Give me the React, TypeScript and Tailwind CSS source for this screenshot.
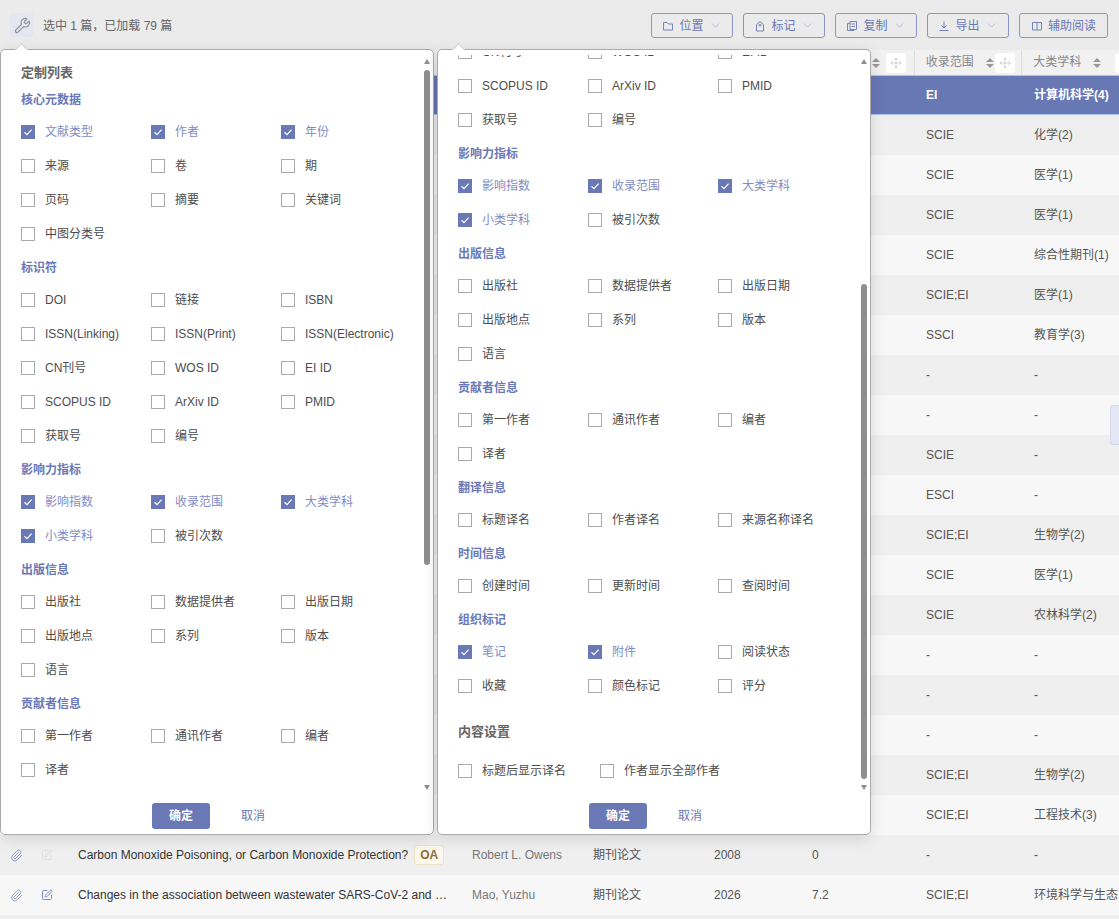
import { ChevronDown, Move, Paperclip, SquarePen, Wrench } from "lucide-react";

type Item = { label: string; checked?: boolean };
type Group = { title: string; items: Item[] };

const GROUPS: Group[] = [
  {
    title: "核心元数据",
    items: [
      { label: "文献类型", checked: true },
      { label: "作者", checked: true },
      { label: "年份", checked: true },
      { label: "来源" },
      { label: "卷" },
      { label: "期" },
      { label: "页码" },
      { label: "摘要" },
      { label: "关键词" },
      { label: "中图分类号" },
    ],
  },
  {
    title: "标识符",
    items: [
      { label: "DOI" },
      { label: "链接" },
      { label: "ISBN" },
      { label: "ISSN(Linking)" },
      { label: "ISSN(Print)" },
      { label: "ISSN(Electronic)" },
      { label: "CN刊号" },
      { label: "WOS ID" },
      { label: "EI ID" },
      { label: "SCOPUS ID" },
      { label: "ArXiv ID" },
      { label: "PMID" },
      { label: "获取号" },
      { label: "编号" },
    ],
  },
  {
    title: "影响力指标",
    items: [
      { label: "影响指数", checked: true },
      { label: "收录范围", checked: true },
      { label: "大类学科", checked: true },
      { label: "小类学科", checked: true },
      { label: "被引次数" },
    ],
  },
  {
    title: "出版信息",
    items: [
      { label: "出版社" },
      { label: "数据提供者" },
      { label: "出版日期" },
      { label: "出版地点" },
      { label: "系列" },
      { label: "版本" },
      { label: "语言" },
    ],
  },
  {
    title: "贡献者信息",
    items: [{ label: "第一作者" }, { label: "通讯作者" }, { label: "编者" }, { label: "译者" }],
  },
  {
    title: "翻译信息",
    items: [{ label: "标题译名" }, { label: "作者译名" }, { label: "来源名称译名" }],
  },
  {
    title: "时间信息",
    items: [{ label: "创建时间" }, { label: "更新时间" }, { label: "查阅时间" }],
  },
  {
    title: "组织标记",
    items: [
      { label: "笔记", checked: true },
      { label: "附件", checked: true },
      { label: "阅读状态" },
      { label: "收藏" },
      { label: "颜色标记" },
      { label: "评分" },
    ],
  },
];

const ROWS = [
  ["EI", "计算机科学(4)"],
  ["SCIE", "化学(2)"],
  ["SCIE", "医学(1)"],
  ["SCIE", "医学(1)"],
  ["SCIE", "综合性期刊(1)"],
  ["SCIE;EI", "医学(1)"],
  ["SSCI", "教育学(3)"],
  ["-", "-"],
  ["-", "-"],
  ["SCIE", "-"],
  ["ESCI", "-"],
  ["SCIE;EI", "生物学(2)"],
  ["SCIE", "医学(1)"],
  ["SCIE", "农林科学(2)"],
  ["-", "-"],
  ["-", "-"],
  ["-", "-"],
  ["SCIE;EI", "生物学(2)"],
  ["SCIE;EI", "工程技术(3)"],
];

function Check({ item, className }: { item: Item; className?: string }) {
  return (
    <label className={`flex h-[34px] items-center ${className ?? ""}`}>
      {item.checked ? (
        <span className="flex h-[14px] w-[14px] items-center justify-center bg-[#6a78b6]">
          <svg viewBox="0 0 14 14" className="h-[14px] w-[14px]" fill="none" stroke="#fff" strokeWidth="1.2">
            <path d="M3.5 7.2 6 9.6l4.6-5" />
          </svg>
        </span>
      ) : (
        <span className="h-[14px] w-[14px] border border-[#aaaaaa] bg-white" />
      )}
      <span className={`ml-[10px] ${item.checked ? "text-[#7f8cc4]" : "text-[#4d4d4d]"}`}>{item.label}</span>
    </label>
  );
}

function ScrollBar({ thumbTop }: { thumbTop: number }) {
  return (
    <>
      <span className="absolute right-[3px] top-[9px] h-0 w-0 border-x-[3px] border-b-[5px] border-x-transparent border-b-[#8f8f8f]" />
      <span
        className="absolute right-[3px] w-[6px] rounded-[3px] bg-[#8f8f8f]"
        style={{ top: thumbTop, height: 495 }}
      />
      <span className="absolute right-[3px] top-[735px] h-0 w-0 border-x-[3px] border-t-[5px] border-x-transparent border-t-[#8f8f8f]" />
    </>
  );
}

function Panel({ left, scroll, thumbTop }: { left: number; scroll: number; thumbTop: number }) {
  return (
    <div
      className="absolute top-[49px] h-[786px] w-[434px] rounded-[5px] border border-[#aaaaaa] bg-white shadow-[0_4px_16px_rgba(0,0,0,0.12)]"
      style={{ left }}
    >
      <span className="absolute left-[16px] top-[-5px] h-[9px] w-[9px] rotate-45 border-l border-t border-[#cccccc] bg-white" />
      <div className="mt-[5px] h-[730px] overflow-hidden">
        <div className="pl-[20px] pt-[8px]" style={{ marginTop: -scroll }}>
          <h3 className="h-[20px] text-[13px] font-bold leading-[20px] text-[#666666]">定制列表</h3>
          {GROUPS.map((group) => (
            <section key={group.title}>
              <h4 className="flex h-[32px] items-center pt-[1px] font-bold text-[#6a78b6]">{group.title}</h4>
              <div className="grid w-[390px] grid-cols-3">
                {group.items.map((item) => (
                  <Check key={item.label} item={item} />
                ))}
              </div>
            </section>
          ))}
          <h3 className="mt-[14px] flex h-[30px] items-center text-[13px] font-bold text-[#666666]">内容设置</h3>
          <div className="mt-[7px] flex">
            <Check item={{ label: "标题后显示译名" }} className="w-[142px]" />
            <Check item={{ label: "作者显示全部作者" }} />
          </div>
        </div>
      </div>
      <ScrollBar thumbTop={thumbTop} />
      <div className="flex items-center pl-[151px] pt-[18px]">
        <button className="h-[26px] w-[58px] rounded-[3px] bg-[#6a78b6] font-bold text-white">确定</button>
        <button className="ml-[31px] text-[#6a78b6]">取消</button>
      </div>
    </div>
  );
}

function ToolIcon({ children }: { children: React.ReactNode }) {
  return (
    <svg viewBox="0 0 12 12" className="h-[12px] w-[12px]" fill="none" stroke="currentColor" strokeWidth="0.9">
      {children}
    </svg>
  );
}

function ToolButton({ icon, label, arrow = true, width }: { icon: React.ReactNode; label: string; arrow?: boolean; width: string }) {
  return (
    <button className={`flex h-[25px] items-center justify-center gap-[4px] rounded-[3px] border border-[#8a96cb] text-[#6a78b6] ${width}`}>
      {icon}
      <span className="ml-[1px]">{label}</span>
      {arrow && <ChevronDown size={13} strokeWidth={1} className="ml-[1px] text-[#8a96cb]" />}
    </button>
  );
}

function HeaderCell({ label, className, gap }: { label?: string; className: string; gap: string }) {
  return (
    <div className={`flex h-full items-center overflow-hidden border-r border-[#dddddd] ${className}`}>
      {label && <span className="mb-[1px] ml-[11px] w-[60px] shrink-0 whitespace-nowrap text-[#888888]">{label}</span>}
      <span className="flex shrink-0 flex-col gap-[2px]">
        <span className="h-0 w-0 border-x-[4px] border-b-[4px] border-x-transparent border-b-[#999999]" />
        <span className="h-0 w-0 border-x-[4px] border-t-[4px] border-x-transparent border-t-[#999999]" />
      </span>
      <span className={`flex h-[20px] w-[20px] shrink-0 items-center justify-center rounded-[3px] bg-white ${gap}`}>
        <Move size={12} strokeWidth={1} className="text-[#aaaaaa]" />
      </span>
    </div>
  );
}

function DataRow({ cells, selected, even }: { cells: string[]; selected?: boolean; even: boolean }) {
  return (
    <div
      className={`flex h-[40px] items-center pl-[926px] ${
        selected ? "border-y border-[#a9c3ea] bg-[#6878b5] font-bold text-white" : even ? "bg-[#efefef] text-[#555555]" : "bg-[#f7f7f7] text-[#555555]"
      }`}
    >
      <span className="w-[108px]">{cells[0]}</span>
      <span className="whitespace-nowrap">{cells[1]}</span>
    </div>
  );
}

function BottomRow({ title, oa, author, year, impact, index, subject, even, noted }: {
  title: string;
  oa?: boolean;
  author: string;
  year: string;
  impact: string;
  index: string;
  subject: string;
  even: boolean;
  noted?: boolean;
}) {
  return (
    <div className={`flex h-[40px] items-center whitespace-nowrap text-[#555555] ${even ? "bg-[#efefef]" : "bg-[#f7f7f7]"}`}>
      <span className="flex w-[78px] items-center pl-[10px]">
        <Paperclip size={13} strokeWidth={1.6} className="text-[#8a96cb]" />
        <SquarePen size={12} strokeWidth={2} className={`ml-[18px] ${noted ? "text-[#7f8cc4]" : "text-[#e2e2e2]"}`} />
      </span>
      <span className="flex w-[394px] items-center text-[#333333]">
        <span className="max-w-[369px] overflow-hidden text-ellipsis">{title}</span>
        {oa && (
          <span className="ml-[6px] flex h-[20px] w-[30px] items-center justify-center rounded-[3px] border border-[#eee3c8] bg-[#fbf7ea] font-bold text-[#8a6d3b]">
            OA
          </span>
        )}
      </span>
      <span className="w-[121px] text-[#777777]">{author}</span>
      <span className="w-[121px]">期刊论文</span>
      <span className="w-[98px]">{year}</span>
      <span className="w-[114px]">{impact}</span>
      <span className="w-[108px]">{index}</span>
      <span>{subject}</span>
    </div>
  );
}

export default function App() {
  return (
    <div className="relative h-[919px] w-[1119px] overflow-hidden bg-[#ebebeb] font-['Liberation_Sans','Noto_Sans_CJK_SC',sans-serif] text-[12px]">
      {/* Toolbar */}
      <div className="flex h-[50px] items-start pl-[10px] pr-[11px] pt-[13px]">
        <span className="flex h-[24px] w-[24px] items-center justify-center rounded-[3px] bg-[#e4e7f3]">
          <Wrench size={17} strokeWidth={1.6} className="text-[#8f8f8f]" />
        </span>
        <span className="ml-[9px] mt-[4px] text-[#666666]">选中 1 篇，已加载 79 篇</span>
        <div className="ml-auto flex gap-[10px]">
          <ToolButton
            icon={<ToolIcon><path d="M1.5 2.5H5L6.5 4H10.5V10H1.5Z" /></ToolIcon>}
            label="位置"
            width="w-[82px]"
          />
          <ToolButton
            icon={<ToolIcon><path d="M2.5 4.5 6 1.5l3.5 3V11h-7Z" /><circle cx="6" cy="5" r="1" /></ToolIcon>}
            label="标记"
            width="w-[82px]"
          />
          <ToolButton
            icon={<ToolIcon><path d="M4 1.5h6.5v8H4ZM5.5 4h3.5M5.5 6.5h3.5M4 3.5H1.5v7H8v-1" /></ToolIcon>}
            label="复制"
            width="w-[82px]"
          />
          <ToolButton
            icon={<ToolIcon><path d="M6 1.5V8M3.5 5.5 6 8l2.5-2.5M1.5 10.5h9" /></ToolIcon>}
            label="导出"
            width="w-[82px]"
          />
          <ToolButton
            icon={<ToolIcon><path d="M1.5 2.5h9v7.5h-9ZM6 2.5V10" /></ToolIcon>}
            label="辅助阅读"
            arrow={false}
            width="w-[89px]"
          />
        </div>
      </div>

      {/* Table behind the popovers */}
      <div className="flex h-[25px] justify-end bg-[#f1f1f1] pl-[800px]">
        <HeaderCell className="w-[115px] justify-end pr-[8px]" gap="ml-[6px]" />
        <HeaderCell label="收录范围" className="w-[108px]" gap="ml-[1px]" />
        <HeaderCell label="大类学科" className="w-[97px] border-r-0" gap="ml-[14px]" />
      </div>
      {ROWS.map((cells, i) => (
        <DataRow key={i} cells={cells} selected={i === 0} even={i % 2 === 1} />
      ))}
      <BottomRow
        title="Carbon Monoxide Poisoning, or Carbon Monoxide Protection?"
        oa
        author="Robert L. Owens"
        year="2008"
        impact="0"
        index="-"
        subject="-"
        even
      />
      <BottomRow
        title="Changes in the association between wastewater SARS-CoV-2 and hospitalizations"
        author="Mao, Yuzhu"
        year="2026"
        impact="7.2"
        index="SCIE;EI"
        subject="环境科学与生态"
        even={false}
        noted
      />
      <div className="h-[4px] bg-[#efefef]" />

      {/* Side tab */}
      <span className="absolute right-0 top-[405px] h-[40px] w-[9px] rounded-l-[3px] border border-r-0 border-[#d5d9ee] bg-[#e4e7f3]" />

      <Panel left={0} scroll={0} thumbTop={20} />
      <Panel left={437} scroll={316} thumbTop={234} />
    </div>
  );
}
